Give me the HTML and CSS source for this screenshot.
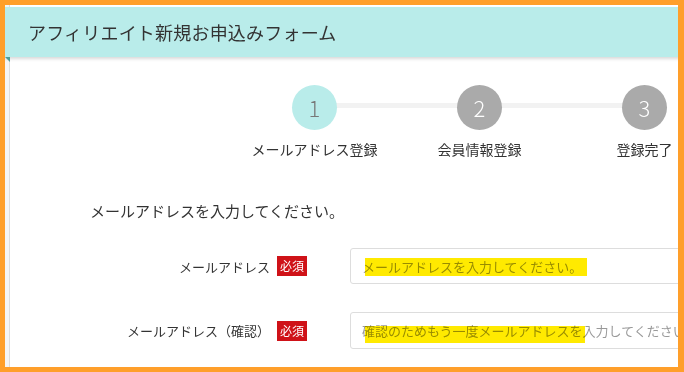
FILE: index.html
```html
<!DOCTYPE html>
<html lang="ja">
<head>
    <meta charset="UTF-8">
    <meta name="viewport" content="width=device-width, initial-scale=1.0">
    <title>アフィリエイト新規お申込みフォーム</title>
    <link rel="stylesheet" href="styles.css">
</head>
<body>
<div class="frame">
    <div class="card">
        <header class="ribbon">アフィリエイト新規お申込みフォーム</header>

        <ol class="steps">
            <li class="step active">
                <span class="num">1</span>
                <span class="step-label">メールアドレス登録</span>
            </li>
            <li class="step">
                <span class="num">2</span>
                <span class="step-label">会員情報登録</span>
            </li>
            <li class="step">
                <span class="num">3</span>
                <span class="step-label">登録完了</span>
            </li>
        </ol>

        <p class="intro">メールアドレスを入力してください。</p>

        <form class="entry-form">
            <div class="row">
                <label class="row-label" for="email">メールアドレス</label>
                <span class="required">必須</span>
                <div class="field">
                    <input type="email" id="email" placeholder="メールアドレスを入力してください。">
                    <span class="marker marker-one"></span>
                </div>
            </div>
            <div class="row">
                <label class="row-label" for="email-confirm">メールアドレス（確認）</label>
                <span class="required">必須</span>
                <div class="field">
                    <input type="email" id="email-confirm" class="tall" placeholder="確認のためもう一度メールアドレスを入力してください">
                    <span class="marker marker-two"></span>
                </div>
            </div>
        </form>
    </div>
</div>
</body>
</html>
```

FILE: styles.css
```css
body {
    margin: 0;
    padding: 0;
    font-family: "Noto Sans CJK JP", "Noto Sans", sans-serif;
    color: #333;
}

.frame {
    width: 684px;
    height: 372px;
    box-sizing: border-box;
    border: 5px solid #ff9f2a;
    border-right-width: 6px;
    background-color: #f5f5f5;
    overflow: hidden;
}

.card {
    margin-left: 4px;
    width: 900px;
    height: 100%;
    padding-top: 2px;
    box-sizing: border-box;
    background-color: #fff;
    border-left: 1px solid #ddd;
}

.ribbon {
    position: relative;
    margin-left: -5px;
    height: 50px;
    line-height: 50px;
    padding-left: 23px;
    background-color: #b9ecea;
    font-size: 18px;
    letter-spacing: 0.2px;
    color: #333;
    box-shadow: 0 2px 3px rgba(0, 0, 0, 0.15);
}

.ribbon::after {
    content: "";
    position: absolute;
    left: 0;
    top: 100%;
    width: 0;
    height: 0;
    border-top: 5px solid #4e9d97;
    border-left: 5px solid transparent;
}

.steps {
    display: flex;
    list-style: none;
    margin: 28px 0 0;
    padding: 0 0 0 222px;
}

.step {
    position: relative;
    width: 165px;
    display: flex;
    flex-direction: column;
    align-items: center;
}

.step + .step::before {
    content: "";
    position: absolute;
    z-index: 0;
    top: 18px;
    left: -82px;
    width: 165px;
    height: 5px;
    background-color: #f2f2f2;
}

.num {
    position: relative;
    z-index: 1;
    width: 45px;
    height: 45px;
    line-height: 45px;
    border-radius: 50%;
    background-color: #aaa;
    color: #fff;
    text-align: center;
    font-size: 22px;
    font-weight: 300;
}

.step.active .num {
    background-color: #b9ecea;
    color: #777;
}

.step-label {
    margin-top: 9px;
    font-size: 14px;
    line-height: 20px;
    color: #333;
    white-space: nowrap;
}

.intro {
    margin: 41px 0 0 80px;
    font-size: 15px;
    line-height: 22px;
    color: #333;
}

.entry-form {
    margin-top: 26px;
}

.row {
    display: flex;
    align-items: center;
    margin-bottom: 28px;
}

.row-label {
    width: 260px;
    text-align: right;
    font-size: 13px;
    color: #333;
}

.required {
    margin-left: 7px;
    width: 30px;
    height: 20px;
    line-height: 20px;
    text-align: center;
    background-color: #cf1218;
    color: #fff;
    font-size: 12px;
}

.field {
    position: relative;
    margin-left: 43px;
}

.field input {
    width: 420px;
    height: 36px;
    box-sizing: border-box;
    padding: 0 0 0 11px;
    border: 1px solid #ddd;
    border-radius: 3px;
    font-family: "Noto Sans CJK JP", "Noto Sans", sans-serif;
    font-size: 13px;
    color: #333;
    outline: none;
}

.field input.tall {
    height: 37px;
}

.field input::placeholder {
    color: #999;
}

.marker {
    position: absolute;
    left: 15px;
    background-color: #ffea00;
    mix-blend-mode: multiply;
    pointer-events: none;
}

.marker-one {
    top: 10px;
    width: 222px;
    height: 18px;
}

.marker-two {
    top: 14px;
    width: 220px;
    height: 17px;
}
```
